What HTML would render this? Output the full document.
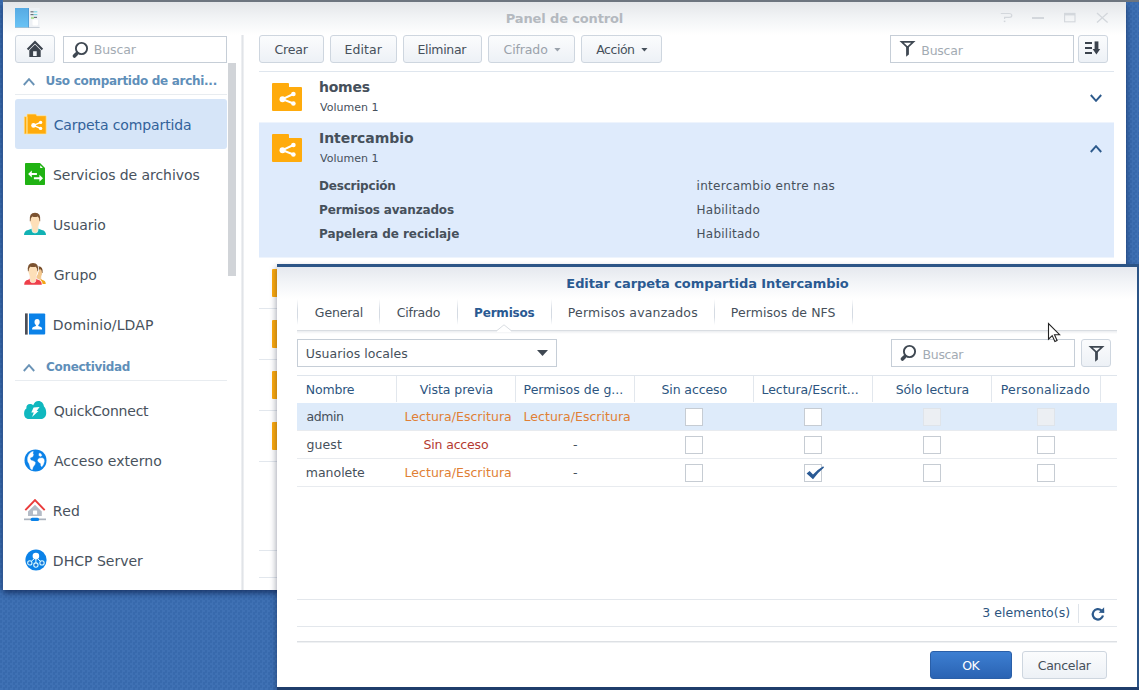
<!DOCTYPE html>
<html lang="es">
<head>
<meta charset="utf-8">
<title>Panel de control</title>
<style>
*{box-sizing:border-box;margin:0;padding:0}
html,body{width:1139px;height:690px;overflow:hidden}
body{position:relative;background:#3b6db0 conic-gradient(#3f71b4 25%,#386aad 0 50%,#3f71b4 0 75%,#386aad 0) 0 0/5px 5px;font-family:'DejaVu Sans','Liberation Sans',sans-serif;font-size:13px;color:#414b56}
.t{position:absolute;white-space:nowrap;line-height:1}
.btn{position:absolute;border:1px solid #ced6df;border-radius:3px;background:linear-gradient(#fbfcfd,#edf1f6)}
.inp{position:absolute;border:1px solid #c6ced7;background:#fff}
.hl{position:absolute;height:1px;background:#e2e7ed}
.vs{position:absolute;width:1px;background:#d9dfe6}
.cb{position:absolute;width:18px;height:18px;border:1px solid #c6ccd3;background:#fff}
.cb.dis{background:#eceff3;border-color:#dfe4ea}
</style>
</head>
<body>
<div style="position:absolute;left:3px;top:2px;width:1123px;height:588px;background:#fff;box-shadow:0 3px 6px rgba(5,20,60,.62)"></div>
<div style="position:absolute;left:3px;top:2px;width:1123px;height:33px;background:linear-gradient(#e4e6e9,#f1f3f5 45%,#ffffff)"></div>
<div class="t" style="left:505.79px;top:12.00px;font-size:13px;color:#b4b9bf;font-weight:bold;letter-spacing:-0.137px;">Panel de control</div>
<svg style="position:absolute;left:15px;top:8px;" width="25" height="20" viewBox="0 0 25 20"><defs><linearGradient id="ag" x1="0" y1="0" x2="0" y2="1"><stop offset="0" stop-color="#56aae3"/><stop offset="1" stop-color="#69c3f5"/></linearGradient></defs><rect x="0" y="0" width="14" height="19.6" fill="url(#ag)"/><rect x="13.4" y="0" width=".8" height="19.6" fill="#4a8fc8"/><rect x="14" y="0" width="10.6" height="19.6" fill="#eef1f5"/>
<rect x="15.5" y="3.2" width="3.2" height="1.2" fill="#6a727c"/><rect x="18.7" y="3.2" width="3.6" height="1.2" fill="#7fd6e4"/>
<rect x="15.5" y="6" width="3.2" height="1.2" fill="#6a727c"/><rect x="18.7" y="6" width="3.6" height="1.2" fill="#7fd6e4"/>
<rect x="16" y="8.8" width="3" height="2.2" fill="#b2de9c"/><rect x="19" y="8.8" width="3" height="1.2" fill="#6a727c"/>
<rect x="17.5" y="11.5" width="5.5" height="6" rx="1" fill="#fff"/><rect x="0" y="19" width="24.6" height="0.8" fill="#9aa7b5" opacity=".6"/></svg>
<svg style="position:absolute;left:1000px;top:12px;" width="14" height="12" viewBox="0 0 14 12"><path d="M.8 1.500H9Q11.800 1.500 11.800 3.400Q11.800 5.300 9 5.300H4.600V7" fill="none" stroke="#d3d7dc" stroke-width="1.200"/><rect x="3.800" y="8.600" width="1.600" height="1.500" fill="#d3d7dc"/></svg>
<div style="position:absolute;left:1032px;top:17px;width:12px;height:1.5px;background:#d3d7dc"></div>
<svg style="position:absolute;left:1063px;top:12px;" width="14" height="12" viewBox="0 0 14 12"><rect x="1.600" y="1.400" width="10.400" height="8.400" fill="none" stroke="#d3d7dc" stroke-width="1.100"/><rect x="1.600" y="1" width="10.400" height="2.400" fill="#d3d7dc"/></svg>
<svg style="position:absolute;left:1096px;top:12px;" width="13" height="12" viewBox="0 0 13 12"><path d="M1 1l10.6 9.6M11.6 1L1 10.6" stroke="#d3d7dc" stroke-width="1.3" fill="none"/></svg>
<div style="position:absolute;left:241px;top:35px;width:3px;height:555px;background:linear-gradient(90deg,#f3f4f6,#e1e4e8,#f3f4f6)"></div>
<div class="btn" style="left:15px;top:35px;width:40px;height:28px"></div>
<svg style="position:absolute;left:26px;top:40px;" width="18" height="18" viewBox="0 0 18 18"><path d="M1.6 9.4L9 1.9L16.4 9.4" fill="none" stroke="#3b434d" stroke-width="2.1"/><path d="M3.3 10.2L9 4.6l5.7 5.6v6.8H3.3z M7.1 11.2v4.9h3.6v-4.9z" fill="#3b434d" fill-rule="evenodd"/></svg>
<div class="inp" style="left:63px;top:36px;width:164px;height:27px"></div>
<svg style="position:absolute;left:71.1px;top:41px;" width="18" height="18" viewBox="0 0 18 18"><circle cx="10.5" cy="7.5" r="5.6" fill="none" stroke="#3f4852" stroke-width="1.9"/><path d="M6.8 11.4L4 14.3" stroke="#3f4852" stroke-width="1.8"/><path d="M5.4 12.9L3.4 15" stroke="#3f4852" stroke-width="3.6" stroke-linecap="round"/></svg>
<div class="t" style="left:93.82px;top:44.30px;font-size:12.5px;color:#a3abb3;letter-spacing:-0.142px;">Buscar</div>
<div style="position:absolute;left:228px;top:63px;width:8px;height:213px;background:#d1d4d8"></div>
<svg style="position:absolute;left:23px;top:77.5px;" width="12" height="8" viewBox="0 0 12 8"><path d="M0.8 7L6.0 1.2L11.2 7" fill="none" stroke="#6a93b6" stroke-width="1.9"/></svg>
<div class="t" style="left:45.57px;top:75.00px;font-size:12px;color:#5f8fb9;font-weight:bold;letter-spacing:-0.295px;">Uso compartido de archi...</div>
<div class="hl" style="left:15px;top:94px;width:212px;background:#e8ecf0"></div>
<div style="position:absolute;left:15px;top:99px;width:212px;height:50px;background:#d6e5f8;border-radius:3px"></div>
<div class="t" style="left:53.63px;top:117.60px;font-size:14px;color:#33629a;letter-spacing:-0.125px;">Carpeta compartida</div>
<div class="t" style="left:53.00px;top:167.60px;font-size:14px;color:#48525d;letter-spacing:-0.056px;">Servicios de archivos</div>
<div class="t" style="left:52.93px;top:217.60px;font-size:14px;color:#48525d;letter-spacing:-0.031px;">Usuario</div>
<div class="t" style="left:53.63px;top:267.60px;font-size:14px;color:#48525d;letter-spacing:0.091px;">Grupo</div>
<div class="t" style="left:52.85px;top:317.60px;font-size:14px;color:#48525d;letter-spacing:0.111px;">Dominio/LDAP</div>
<div class="t" style="left:53.64px;top:403.70px;font-size:14px;color:#48525d;letter-spacing:-0.228px;">QuickConnect</div>
<div class="t" style="left:53.88px;top:453.70px;font-size:14px;color:#48525d;letter-spacing:0.043px;">Acceso externo</div>
<div class="t" style="left:52.85px;top:503.70px;font-size:14px;color:#48525d;letter-spacing:0.189px;">Red</div>
<div class="t" style="left:52.85px;top:553.70px;font-size:14px;color:#48525d;letter-spacing:0.015px;">DHCP Server</div>
<svg style="position:absolute;left:23px;top:363.5px;" width="12" height="8" viewBox="0 0 12 8"><path d="M0.8 7L6.0 1.2L11.2 7" fill="none" stroke="#6a93b6" stroke-width="1.9"/></svg>
<div class="t" style="left:46.12px;top:360.80px;font-size:12px;color:#5f8fb9;font-weight:bold;letter-spacing:-0.329px;">Conectividad</div>
<div class="hl" style="left:15px;top:380px;width:212px;background:#e8ecf0"></div>
<svg style="position:absolute;left:23px;top:112px;" width="25" height="24" viewBox="0 0 25 24"><path d="M1.2 5.2Q1.2 4.6 1.8 4.6H4V22H1.8Q1.2 22 1.2 21.4z" fill="#ffab0c" stroke="#ffe9a8" stroke-width=".7"/>
<path d="M4 2.6Q4 2 4.6 2H12.4Q13 2 13.3 2.6L13.8 3.7H22.6Q23.2 3.7 23.2 4.3V21.4Q23.2 22 22.6 22H4z" fill="#ffab0c" stroke="#ffe9a8" stroke-width=".7"/>
<path d="M4.1 5v16.6" stroke="#ffd978" stroke-width=".8"/>
<g fill="#fff"><circle cx="10.5" cy="13.4" r="2.3"/><circle cx="17.6" cy="10.4" r="1.7"/><circle cx="17.6" cy="16.4" r="1.7"/></g><path d="M17.6 10.4L10.5 13.4L17.6 16.4" stroke="#fff" stroke-width="1.4" fill="none"/></svg>
<svg style="position:absolute;left:25px;top:163px;" width="20" height="22" viewBox="0 0 20 22"><path d="M.8 0H15L20 5V21.2Q20 21.9 19.2 21.9H.8Q0 21.9 0 21.2V.8Q0 0 .8 0z" fill="#20b213"/><path d="M15.2 2.2L17.9 4.9H15.2z" fill="#fff"/>
<path d="M3.1 11L6.8 7.5V9.9H11.9V12.1H6.8V14.5z" fill="#fff"/><path d="M18 15.2L14.4 11.7V14.2H8.9V16.3H14.4V18.7z" fill="#fff"/></svg>
<svg style="position:absolute;left:23px;top:212px;" width="24" height="24" viewBox="0 0 24 24"><g transform="translate(12,0.8) scale(1.0)">
<path d="M-11 22.2Q-11 17.9 -6.8 17.1L-3.4 16H3.4L6.8 17.1Q11 17.9 11 22.2z" fill="#12b2b4"/>
<path d="M-3.1 12h6.2v5Q3.1 20.2 0 20.2Q-3.1 20.2 -3.1 17z" fill="#fddfb8" stroke="#d4f3f3" stroke-width=".7"/>
<ellipse cx="0" cy="8.2" rx="4.7" ry="6.3" fill="#fddfb8"/>
<path d="M-5.2 8.4Q-6.2 0 0 0Q6.2 0 5.2 8.4L4.5 8.4Q4.4 4.8 2.8 3.7Q0 4.7 -2.8 3.7Q-4.4 4.8 -4.5 8.4z" fill="#7b5230"/></g></svg>
<svg style="position:absolute;left:23px;top:262px;" width="24" height="24" viewBox="0 0 24 24"><g transform="translate(15.4,4.2) scale(0.8)">
<path d="M-9.2 22.2Q-9.2 17.9 -4.999999999999999 17.1L-3.4 16H3.4L4.999999999999999 17.1Q9.2 17.9 9.2 22.2z" fill="#f2a516"/>
<path d="M-3.1 12h6.2v5Q3.1 20.2 0 20.2Q-3.1 20.2 -3.1 17z" fill="#f3c88f" stroke="#f3c88f" stroke-width=".7"/>
<ellipse cx="0" cy="8.2" rx="4.7" ry="6.3" fill="#f3c88f"/>
<path d="M-5.2 8.4Q-6.2 0 0 0Q6.2 0 5.2 8.4L4.5 8.4Q4.4 4.8 2.8 3.7Q0 4.7 -2.8 3.7Q-4.4 4.8 -4.5 8.4z" fill="#7a4f2a"/></g><g stroke="#fff" stroke-width="1.6" stroke-linejoin="round"><g transform="translate(10,1) scale(0.98)">
<path d="M-9 22.2Q-9 17.9 -4.8 17.1L-3.4 16H3.4L4.8 17.1Q9 17.9 9 22.2z" fill="#fff"/>
<path d="M-3.1 12h6.2v5Q3.1 20.2 0 20.2Q-3.1 20.2 -3.1 17z" fill="#fff" stroke="#fff" stroke-width=".7"/>
<ellipse cx="0" cy="8.2" rx="4.7" ry="6.3" fill="#fff"/>
<path d="M-5.2 8.4Q-6.2 0 0 0Q6.2 0 5.2 8.4L4.5 8.4Q4.4 4.8 2.8 3.7Q0 4.7 -2.8 3.7Q-4.4 4.8 -4.5 8.4z" fill="#fff"/></g></g><g transform="translate(10,1) scale(0.98)">
<path d="M-9 22.2Q-9 17.9 -4.8 17.1L-3.4 16H3.4L4.8 17.1Q9 17.9 9 22.2z" fill="#ee3f4a"/>
<path d="M-3.1 12h6.2v5Q3.1 20.2 0 20.2Q-3.1 20.2 -3.1 17z" fill="#fddfb8" stroke="#fbe3e0" stroke-width=".7"/>
<ellipse cx="0" cy="8.2" rx="4.7" ry="6.3" fill="#fddfb8"/>
<path d="M-5.2 8.4Q-6.2 0 0 0Q6.2 0 5.2 8.4L4.5 8.4Q4.4 4.8 2.8 3.7Q0 4.7 -2.8 3.7Q-4.4 4.8 -4.5 8.4z" fill="#7b5230"/></g></svg>
<svg style="position:absolute;left:24px;top:313px;" width="22" height="22" viewBox="0 0 22 22"><rect x="1" y="0.4" width="2.7" height="21.2" fill="#4b4e57"/><path d="M5 .4H20.2Q21.2 .4 21.2 1.4V20.6Q21.2 21.6 20.2 21.6H5z" fill="#0b82e8"/>
<path transform="translate(0,.9)" d="M13.1 5a2.6 3 0 0 1 2.6 3c0 1.5-.7 2.6-1.4 3.1v1l2.6 1q1.2.5 1.2 1.7v.7H8.100v-.7q0-1.200 1.200-1.700l2.600-1v-1c-.7-.5-1.400-1.600-1.400-3.100a2.600 3 0 0 1 2.600-3z" fill="#fff"/></svg>
<svg style="position:absolute;left:23px;top:400px;" width="24" height="20" viewBox="0 0 24 20"><path d="M6 19C2.500 19 1.100 16.500 1.100 13.500C1.100 11 2 9.500 3.400 8.600C3 5.800 4.600 4 7 4C8.400 4 9.400 4.500 10.200 5.200C11.200 2.600 13 1 15.400 1C18.600 1 20.600 3.400 21 6.600C22.600 8 23.200 10.400 23.200 13C23.200 16.600 21 19 18 19z" fill="#10b8bf"/>
<path d="M10.600 7.500L16.600 7L13.600 11H15.600L9 17L10.800 12.500H8.300z" fill="#fff"/></svg>
<svg style="position:absolute;left:23.6px;top:448.6px;" width="24" height="24" viewBox="0 0 24 24"><circle cx="11.5" cy="11.4" r="11" fill="#0b82e8"/>
<path d="M9.2 2.4L6.8 3.4L5.0 5.4L3.8 8.2L3.6 10.6L4.0 12.9L5.0 14.4L5.8 16.8L6.6 19.6L8.2 20.8L9.0 17.9L11.0 15.2L11.2 13.2L9.2 12.0L7.4 11.6L6.4 10.4L6.0 9.2L7.0 8.2L8.6 7.8L9.4 5.8L8.8 4.2z" fill="#fff" stroke="#fff" stroke-width=".5" stroke-linejoin="round"/><path d="M15.2 4.2L17.0 4.8L17.8 6.8L16.0 7.4L14.8 6.2z" fill="#fff" stroke="#fff" stroke-width=".4" stroke-linejoin="round"/><path d="M14.0 10.4L15.4 9.2L18.4 9.0L20.0 10.2L20.2 12.6L19.4 15.2L18.0 17.6L17.0 17.0L16.8 14.6L14.8 13.2L13.8 11.8z" fill="#fff" stroke="#fff" stroke-width=".5" stroke-linejoin="round"/></svg>
<svg style="position:absolute;left:23px;top:498.5px;" width="24" height="24" viewBox="0 0 24 24"><path d="M5 12.500L12 5.800L18.800 12.500V16.900H5z" fill="#b4bbc6"/><rect x="10" y="11.500" width="4.100" height="4" rx=".5" fill="#fff"/>
<path d="M2.300 11.200L12 1.100L21.700 11.200" fill="none" stroke="#ea3b3b" stroke-width="1.900" stroke-linejoin="miter"/>
<rect x="1" y="19.500" width="22" height="1.700" fill="#aab2bd"/><rect x="7.600" y="18.700" width="8.500" height="3.400" rx="1.700" fill="#0b82e8"/></svg>
<svg style="position:absolute;left:24.5px;top:549.4px;" width="22" height="22" viewBox="0 0 22 22"><circle cx="11" cy="11" r="10.6" fill="#0b82e8"/><circle cx="10.900" cy="7.100" r="3.300" fill="#fff"/>
<path d="M10.900 9v5M9.500 9.600L6.200 12.400M12.300 9.600L15.600 12.400" stroke="#e6fbff" stroke-width="1" fill="none"/>
<g fill="#1f78d8" stroke="#d8fbff" stroke-width="1.050"><circle cx="4.800" cy="13.900" r="2.150"/><circle cx="10.900" cy="16" r="2.150"/><circle cx="17" cy="13.900" r="2.150"/></g></svg>
<div class="btn" style="left:259px;top:35px;width:65px;height:28px"></div>
<div class="t" style="left:274.57px;top:44.00px;font-size:12.5px;color:#46505b;letter-spacing:-0.181px;">Crear</div>
<div class="btn" style="left:330px;top:35px;width:67px;height:28px"></div>
<div class="t" style="left:344.52px;top:44.00px;font-size:12.5px;color:#46505b;letter-spacing:0.063px;">Editar</div>
<div class="btn" style="left:403px;top:35px;width:79px;height:28px"></div>
<div class="t" style="left:417.52px;top:44.00px;font-size:12.5px;color:#46505b;letter-spacing:-0.339px;">Eliminar</div>
<div class="btn" style="left:488px;top:35px;width:87px;height:28px"></div>
<div class="t" style="left:503.57px;top:44.00px;font-size:12.5px;color:#9aa2ab;letter-spacing:-0.125px;">Cifrado</div>
<svg style="position:absolute;left:554px;top:48.4px;" width="7" height="4" viewBox="0 0 7 4"><path d="M0.3 0h6.200L3.400 3.400z" fill="#9aa2ab"/></svg>
<div class="btn" style="left:581px;top:35px;width:81px;height:28px"></div>
<div class="t" style="left:596.29px;top:44.00px;font-size:12.5px;color:#46505b;letter-spacing:-0.488px;">Acción</div>
<svg style="position:absolute;left:640.5px;top:48.4px;" width="7" height="4" viewBox="0 0 7 4"><path d="M0.3 0h6.200L3.400 3.400z" fill="#46505b"/></svg>
<div class="inp" style="left:890px;top:35px;width:184px;height:28px"></div>
<svg style="position:absolute;left:899px;top:40px;" width="17" height="18" viewBox="0 0 17 18"><path d="M2.6 1.8H14.4L8.5 7.4z" fill="none" stroke="#3f4852" stroke-width="1.7" stroke-linejoin="miter"/><path d="M7.1 6.6h2.8v7.8L7.1 16.8z" fill="#3f4852"/></svg>
<div class="t" style="left:921.32px;top:45.00px;font-size:12.5px;color:#a3abb3;letter-spacing:-0.242px;">Buscar</div>
<div class="btn" style="left:1078px;top:35px;width:30px;height:28px"></div>
<svg style="position:absolute;left:1084px;top:41px;" width="18" height="15" viewBox="0 0 18 15"><path d="M1 2h7M1 7h7M1 12h7" stroke="#3b434d" stroke-width="2" fill="none"/><path d="M12.500 0.400v9" stroke="#3b434d" stroke-width="3.800" fill="none"/><path d="M8.6 8h7.6L12.4 13.6z" fill="#3b434d"/></svg>
<div class="hl" style="left:259px;top:71px;width:855px;background:#dfe6ee"></div>
<div style="position:absolute;left:259px;top:122px;width:855px;height:1px;background:#eef4fd"></div>
<div style="position:absolute;left:259px;top:123px;width:855px;height:134px;background:#dfebfc"></div>
<div style="position:absolute;left:259px;top:257px;width:855px;height:1px;background:#eef4fd"></div>
<svg style="position:absolute;left:272px;top:83px;" width="30" height="28" viewBox="0 0 30 28"><path d="M0 1Q0 0 1 0H16Q17 0 17 1V4H29Q30 4 30 5V27Q30 28 29 28H1Q0 28 0 27z" fill="#ffab0c"/><g fill="#fff"><circle cx="10.5" cy="16.2" r="3"/><circle cx="21.4" cy="11" r="2.3"/><circle cx="21.4" cy="20.5" r="2.3"/></g><path d="M21.4 11L10.5 16.2L21.4 20.5" stroke="#fff" stroke-width="2" fill="none"/></svg>
<svg style="position:absolute;left:272px;top:134px;" width="30" height="28" viewBox="0 0 30 28"><path d="M0 1Q0 0 1 0H16Q17 0 17 1V4H29Q30 4 30 5V27Q30 28 29 28H1Q0 28 0 27z" fill="#ffab0c"/><g fill="#fff"><circle cx="10.5" cy="16.2" r="3"/><circle cx="21.4" cy="11" r="2.3"/><circle cx="21.4" cy="20.5" r="2.3"/></g><path d="M21.4 11L10.5 16.2L21.4 20.5" stroke="#fff" stroke-width="2" fill="none"/></svg>
<svg style="position:absolute;left:272px;top:269px;" width="30" height="28" viewBox="0 0 30 28"><path d="M0 1Q0 0 1 0H16Q17 0 17 1V4H29Q30 4 30 5V27Q30 28 29 28H1Q0 28 0 27z" fill="#ffab0c"/><g fill="#fff"><circle cx="10.5" cy="16.2" r="3"/><circle cx="21.4" cy="11" r="2.3"/><circle cx="21.4" cy="20.5" r="2.3"/></g><path d="M21.4 11L10.5 16.2L21.4 20.5" stroke="#fff" stroke-width="2" fill="none"/></svg>
<svg style="position:absolute;left:272px;top:320px;" width="30" height="28" viewBox="0 0 30 28"><path d="M0 1Q0 0 1 0H16Q17 0 17 1V4H29Q30 4 30 5V27Q30 28 29 28H1Q0 28 0 27z" fill="#ffab0c"/><g fill="#fff"><circle cx="10.5" cy="16.2" r="3"/><circle cx="21.4" cy="11" r="2.3"/><circle cx="21.4" cy="20.5" r="2.3"/></g><path d="M21.4 11L10.5 16.2L21.4 20.5" stroke="#fff" stroke-width="2" fill="none"/></svg>
<svg style="position:absolute;left:272px;top:371px;" width="30" height="28" viewBox="0 0 30 28"><path d="M0 1Q0 0 1 0H16Q17 0 17 1V4H29Q30 4 30 5V27Q30 28 29 28H1Q0 28 0 27z" fill="#ffab0c"/><g fill="#fff"><circle cx="10.5" cy="16.2" r="3"/><circle cx="21.4" cy="11" r="2.3"/><circle cx="21.4" cy="20.5" r="2.3"/></g><path d="M21.4 11L10.5 16.2L21.4 20.5" stroke="#fff" stroke-width="2" fill="none"/></svg>
<svg style="position:absolute;left:272px;top:422px;" width="30" height="28" viewBox="0 0 30 28"><path d="M0 1Q0 0 1 0H16Q17 0 17 1V4H29Q30 4 30 5V27Q30 28 29 28H1Q0 28 0 27z" fill="#ffab0c"/><g fill="#fff"><circle cx="10.5" cy="16.2" r="3"/><circle cx="21.4" cy="11" r="2.3"/><circle cx="21.4" cy="20.5" r="2.3"/></g><path d="M21.4 11L10.5 16.2L21.4 20.5" stroke="#fff" stroke-width="2" fill="none"/></svg>
<div class="hl" style="left:259px;top:308px;width:855px"></div>
<div class="hl" style="left:259px;top:359px;width:855px"></div>
<div class="hl" style="left:259px;top:410px;width:855px"></div>
<div class="hl" style="left:259px;top:461px;width:855px"></div>
<div class="hl" style="left:259px;top:550px;width:855px"></div>
<div class="hl" style="left:259px;top:577px;width:855px"></div>
<div class="t" style="left:319.05px;top:79.60px;font-size:14px;color:#46505b;font-weight:bold;letter-spacing:-0.256px;">homes</div>
<div class="t" style="left:319.99px;top:102.00px;font-size:11px;color:#46505b;letter-spacing:0.021px;">Volumen 1</div>
<div class="t" style="left:318.99px;top:131.00px;font-size:14px;color:#46505b;font-weight:bold;letter-spacing:-0.052px;">Intercambio</div>
<div class="t" style="left:319.99px;top:153.00px;font-size:11px;color:#46505b;letter-spacing:0.021px;">Volumen 1</div>
<div class="t" style="left:319.07px;top:179.60px;font-size:12px;color:#46505b;font-weight:bold;letter-spacing:-0.222px;">Descripción</div>
<div class="t" style="left:319.07px;top:203.80px;font-size:12px;color:#46505b;font-weight:bold;letter-spacing:-0.164px;">Permisos avanzados</div>
<div class="t" style="left:319.07px;top:227.60px;font-size:12px;color:#46505b;font-weight:bold;letter-spacing:-0.063px;">Papelera de reciclaje</div>
<div class="t" style="left:696.53px;top:179.60px;font-size:12px;color:#46505b;letter-spacing:0.304px;">intercambio entre nas</div>
<div class="t" style="left:696.55px;top:203.80px;font-size:12px;color:#46505b;letter-spacing:0.240px;">Habilitado</div>
<div class="t" style="left:696.55px;top:227.60px;font-size:12px;color:#46505b;letter-spacing:0.240px;">Habilitado</div>
<svg style="position:absolute;left:1090px;top:93.5px;" width="12" height="8" viewBox="0 0 12 8"><path d="M0.8 1L6.0 6.8L11.2 1" fill="none" stroke="#2d5a8c" stroke-width="1.9"/></svg>
<svg style="position:absolute;left:1090px;top:145px;" width="12" height="8" viewBox="0 0 12 8"><path d="M0.8 7L6.0 1.2L11.2 7" fill="none" stroke="#2d5a8c" stroke-width="1.9"/></svg>
<div style="position:absolute;left:277px;top:264px;width:862px;height:426px;background:#fff;box-shadow:-1px 3px 6px rgba(10,20,50,.36)"></div>
<div style="position:absolute;left:277px;top:264px;width:862px;height:3px;background:#2b5486"></div>
<div style="position:absolute;left:1137px;top:264px;width:2px;height:426px;background:#2b5486"></div>
<div style="position:absolute;left:277px;top:687px;width:862px;height:3px;background:#1f3d6b"></div>
<div style="position:absolute;left:277px;top:267px;width:860px;height:32px;background:linear-gradient(#e5e8ee,#f3f5f8 50%,#ffffff)"></div>
<div class="t" style="left:566.34px;top:276.50px;font-size:13px;color:#2a5a92;font-weight:bold;letter-spacing:-0.079px;">Editar carpeta compartida Intercambio</div>
<div class="vs" style="left:297px;top:299px;height:26px;background:linear-gradient(#fff,#d5dbe3 40%,#d5dbe3 70%,#fff)"></div>
<div class="vs" style="left:379px;top:299px;height:26px;background:linear-gradient(#fff,#d5dbe3 40%,#d5dbe3 70%,#fff)"></div>
<div class="vs" style="left:457px;top:299px;height:26px;background:linear-gradient(#fff,#d5dbe3 40%,#d5dbe3 70%,#fff)"></div>
<div class="vs" style="left:551px;top:299px;height:26px;background:linear-gradient(#fff,#d5dbe3 40%,#d5dbe3 70%,#fff)"></div>
<div class="vs" style="left:714px;top:299px;height:26px;background:linear-gradient(#fff,#d5dbe3 40%,#d5dbe3 70%,#fff)"></div>
<div class="vs" style="left:852px;top:299px;height:26px;background:linear-gradient(#fff,#d5dbe3 40%,#d5dbe3 70%,#fff)"></div>
<div class="hl" style="left:297px;top:330px;width:820px;background:#d9dde2"></div>
<div style="position:absolute;left:297px;top:331px;width:820px;height:3px;background:linear-gradient(#ebedf0,#fff)"></div>
<svg style="position:absolute;left:497px;top:324px;" width="14" height="8" viewBox="0 0 14 8"><path d="M0 6.5L7 0.8L14 6.5V8H0z" fill="#fff"/><path d="M0 6.5L7 0.8L14 6.5" fill="none" stroke="#d9dde2" stroke-width="1"/></svg>
<div class="t" style="left:314.87px;top:307.20px;font-size:12.5px;color:#46505b;letter-spacing:-0.147px;">General</div>
<div class="t" style="left:396.77px;top:307.20px;font-size:12.5px;color:#46505b;letter-spacing:-0.242px;">Cifrado</div>
<div class="t" style="left:474.07px;top:307.20px;font-size:12px;color:#2a5a92;font-weight:bold;letter-spacing:-0.185px;">Permisos</div>
<div class="t" style="left:567.82px;top:307.20px;font-size:12.5px;color:#46505b;letter-spacing:0.173px;">Permisos avanzados</div>
<div class="t" style="left:730.82px;top:307.20px;font-size:12.5px;color:#46505b;letter-spacing:0.063px;">Permisos de NFS</div>
<div class="inp" style="left:297px;top:339px;width:260px;height:28px"></div>
<div class="t" style="left:305.87px;top:347.60px;font-size:12.5px;color:#46505b;letter-spacing:0.038px;">Usuarios locales</div>
<svg style="position:absolute;left:537px;top:350px;" width="11" height="6" viewBox="0 0 11 6"><path d="M0 0h11L5.5 6z" fill="#3f4852"/></svg>
<div class="inp" style="left:891px;top:339px;width:184px;height:28px"></div>
<svg style="position:absolute;left:899px;top:343.8px;" width="18" height="18" viewBox="0 0 18 18"><circle cx="10.5" cy="7.5" r="5.6" fill="none" stroke="#3f4852" stroke-width="1.9"/><path d="M6.8 11.4L4 14.3" stroke="#3f4852" stroke-width="1.8"/><path d="M5.4 12.9L3.4 15" stroke="#3f4852" stroke-width="3.6" stroke-linecap="round"/></svg>
<div class="t" style="left:922.62px;top:348.80px;font-size:12.5px;color:#a3abb3;letter-spacing:-0.362px;">Buscar</div>
<div class="btn" style="left:1081px;top:339px;width:30px;height:28px"></div>
<svg style="position:absolute;left:1088px;top:344.5px;" width="17" height="18" viewBox="0 0 17 18"><path d="M2.6 1.8H14.4L8.5 7.4z" fill="none" stroke="#3f4852" stroke-width="1.7" stroke-linejoin="miter"/><path d="M7.1 6.6h2.8v7.8L7.1 16.8z" fill="#3f4852"/></svg>
<div class="hl" style="left:297px;top:375px;width:820px;background:#dfe5ec"></div>
<div class="vs" style="left:396px;top:376px;height:26px;background:#e2e7ed"></div>
<div class="vs" style="left:515px;top:376px;height:26px;background:#e2e7ed"></div>
<div class="vs" style="left:634px;top:376px;height:26px;background:#e2e7ed"></div>
<div class="vs" style="left:753px;top:376px;height:26px;background:#e2e7ed"></div>
<div class="vs" style="left:872px;top:376px;height:26px;background:#e2e7ed"></div>
<div class="vs" style="left:991px;top:376px;height:26px;background:#e2e7ed"></div>
<div class="vs" style="left:1100px;top:376px;height:26px;background:#e2e7ed"></div>
<div class="t" style="left:305.82px;top:383.80px;font-size:12.5px;color:#2c5580;letter-spacing:-0.186px;">Nombre</div>
<div class="t" style="left:419.79px;top:383.80px;font-size:12.5px;color:#2c5580;letter-spacing:-0.043px;">Vista previa</div>
<div class="t" style="left:523.52px;top:383.80px;font-size:12.5px;color:#2c5580;letter-spacing:0.022px;">Permisos de g...</div>
<div class="t" style="left:661.50px;top:383.80px;font-size:12.5px;color:#2c5580;letter-spacing:-0.111px;">Sin acceso</div>
<div class="t" style="left:761.52px;top:383.80px;font-size:12.5px;color:#2c5580;letter-spacing:-0.046px;">Lectura/Escrit...</div>
<div class="t" style="left:895.70px;top:383.80px;font-size:12.5px;color:#2c5580;letter-spacing:-0.076px;">Sólo lectura</div>
<div class="t" style="left:1000.72px;top:383.80px;font-size:12.5px;color:#2c5580;letter-spacing:0.221px;">Personalizado</div>
<div style="position:absolute;left:297px;top:403px;width:820px;height:28px;background:#deebfa"></div>
<div class="hl" style="left:297px;top:430px;width:820px;background:#e8ebef"></div>
<div class="hl" style="left:297px;top:458px;width:820px;background:#e8ebef"></div>
<div class="hl" style="left:297px;top:486px;width:820px;background:#e8ebef"></div>
<div class="t" style="left:306.50px;top:410.70px;font-size:12.5px;color:#46505b;letter-spacing:-0.413px;">admin</div>
<div class="t" style="left:306.57px;top:438.70px;font-size:12.5px;color:#46505b;letter-spacing:0.083px;">guest</div>
<div class="t" style="left:305.85px;top:466.70px;font-size:12.5px;color:#46505b;letter-spacing:-0.031px;">manolete</div>
<div class="t" style="left:404.52px;top:410.70px;font-size:12.5px;color:#e07f35;letter-spacing:0.038px;">Lectura/Escritura</div>
<div class="t" style="left:523.52px;top:410.70px;font-size:12.5px;color:#e07f35;letter-spacing:0.038px;">Lectura/Escritura</div>
<div class="t" style="left:423.50px;top:438.70px;font-size:12.5px;color:#b43a30;letter-spacing:-0.166px;">Sin acceso</div>
<div class="t" style="left:404.52px;top:466.70px;font-size:12.5px;color:#e07f35;letter-spacing:0.038px;">Lectura/Escritura</div>
<div class="t" style="left:572.92px;top:438.70px;font-size:12.5px;color:#46505b;">-</div>
<div class="t" style="left:572.92px;top:466.70px;font-size:12.5px;color:#46505b;">-</div>
<div class="cb" style="left:685px;top:408px"></div>
<div class="cb" style="left:804px;top:408px"></div>
<div class="cb dis" style="left:923px;top:408px"></div>
<div class="cb dis" style="left:1037px;top:408px"></div>
<div class="cb" style="left:685px;top:436px"></div>
<div class="cb" style="left:804px;top:436px"></div>
<div class="cb" style="left:923px;top:436px"></div>
<div class="cb" style="left:1037px;top:436px"></div>
<div class="cb" style="left:685px;top:464px"></div>
<div class="cb" style="left:804px;top:464px"></div>
<div class="cb" style="left:923px;top:464px"></div>
<div class="cb" style="left:1037px;top:464px"></div>
<svg style="position:absolute;left:805px;top:465px;" width="22" height="18" viewBox="0 0 22 18"><path d="M1.6 8.4L4.6 6L8 9.600Q12.500 4.600 18.200 1.300L19 2.400Q13 7.400 8 14.200z" fill="#2a5a95"/></svg>
<div class="hl" style="left:297px;top:599px;width:820px;background:#e3e7ec"></div>
<div class="hl" style="left:297px;top:626px;width:820px;background:#e3e7ec"></div>
<div style="position:absolute;left:297px;top:641px;width:820px;height:1px;background:#dde0e4"></div>
<div style="position:absolute;left:297px;top:642px;width:820px;height:1px;background:#eff1f3"></div>
<div class="t" style="left:982.20px;top:607.40px;font-size:12.5px;color:#2c5580;letter-spacing:0.049px;">3 elemento(s)</div>
<div class="vs" style="left:1078px;top:604px;height:19px;background:#dfe4ea"></div>
<svg style="position:absolute;left:1090px;top:606px;" width="16" height="16" viewBox="0 0 16 16"><path d="M11.400 4.400A5.200 5.200 0 1 0 13 9.600" fill="none" stroke="#2d5a8c" stroke-width="2.200"/><path d="M8.600 6.800L14.300 7L14.100 1.300z" fill="#2d5a8c"/></svg>
<div class="btn" style="left:930px;top:651px;width:82px;height:28px;border-color:#2a5fa8;background:linear-gradient(#3d7fd2,#2a63b3)"></div>
<div class="t" style="left:962.37px;top:659.80px;font-size:12.5px;color:#fff;letter-spacing:-0.586px;">OK</div>
<div class="btn" style="left:1022px;top:651px;width:85px;height:28px"></div>
<div class="t" style="left:1037.77px;top:659.80px;font-size:12.5px;color:#46505b;letter-spacing:-0.289px;">Cancelar</div>
<svg style="position:absolute;left:1047px;top:322px;" width="14" height="22" viewBox="0 0 14 22"><path d="M1.500 1.500V17.100L5.200 13.600L7.900 19.500L10.100 18.500L7.500 12.700H12.600z" fill="#fff" stroke="#222" stroke-width="1.1" stroke-linejoin="miter"/></svg>
<div style="position:absolute;left:3px;top:0px;width:1136px;height:2px;background:#6d757f"></div>
</body>
</html>
